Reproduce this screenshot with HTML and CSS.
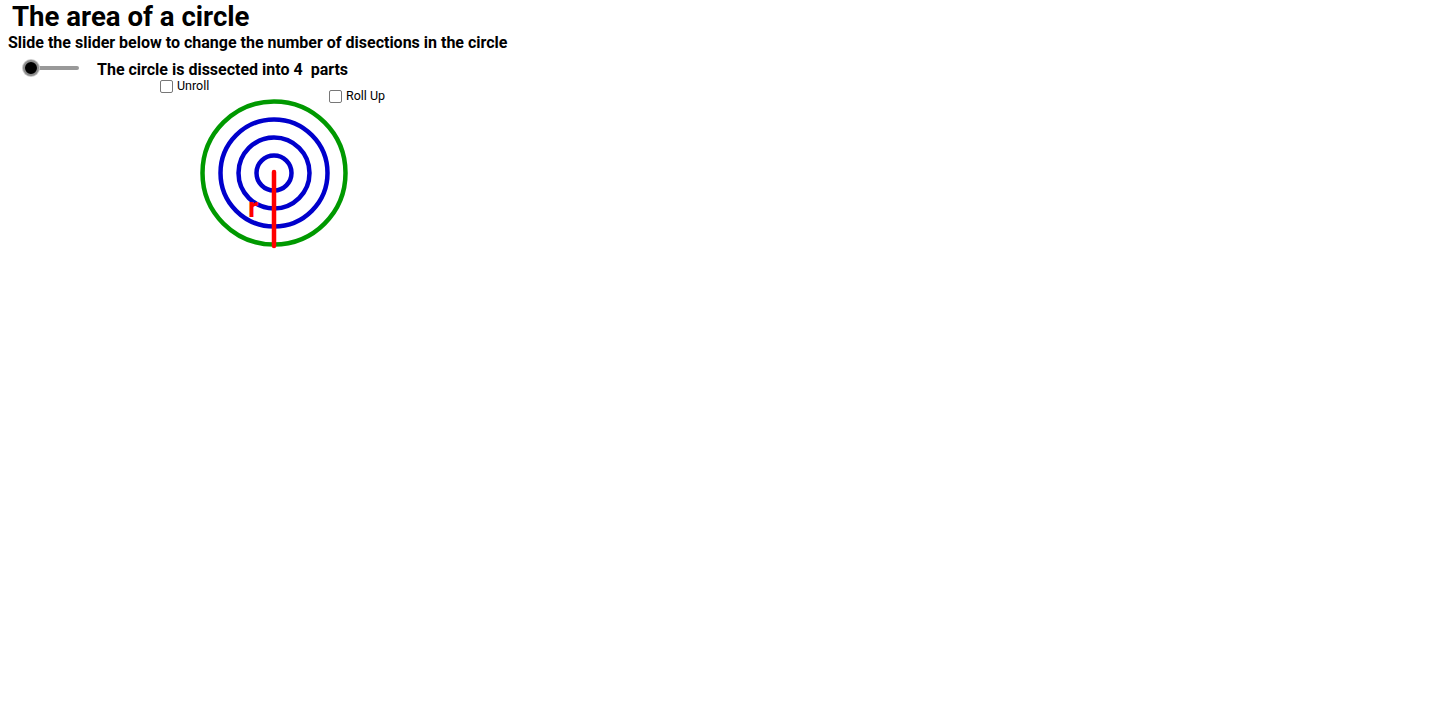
FILE: index.html
```html
<!DOCTYPE html>
<html>
<head>
<meta charset="utf-8">
<link rel="stylesheet" href="styles.css">
</head>
<body>
<div class="applet">
  <h1 class="title">The area of a circle</h1>
  <p class="subtitle">Slide the slider below to change the number of disections in the circle</p>
  <div class="stage">
    <div class="slider"><span class="track"></span><span class="knob"></span></div>
    <p class="caption">The circle is dissected into 4&nbsp; parts</p>
    <label class="check check-unroll"><span class="box"></span>Unroll</label>
    <label class="check check-rollup"><span class="box"></span>Roll Up</label>
    <svg class="diagram" width="160" height="160" viewBox="194 93 160 160">
      <circle cx="274" cy="173" r="71.5" fill="none" stroke="#009900" stroke-width="4.5"/>
      <circle cx="274" cy="173" r="53.5" fill="none" stroke="#0000cc" stroke-width="4.5"/>
      <circle cx="274" cy="173" r="35.5" fill="none" stroke="#0000cc" stroke-width="4.5"/>
      <circle cx="274" cy="173" r="17.5" fill="none" stroke="#0000cc" stroke-width="4.5"/>
      <line x1="274" y1="172" x2="274" y2="246" stroke="#ff0000" stroke-width="4.5" stroke-linecap="round"/>
      <text x="248" y="217" class="rlabel">r</text>
    </svg>
  </div>
</div>
</body>
</html>
```
FILE: styles.css
```css
html, body {
  margin: 0;
  padding: 0;
  background: #ffffff;
}
.applet {
  width: 1440px;
  height: 704px;
  font-family: Roboto, "Liberation Sans", sans-serif;
  color: #000000;
  overflow: hidden;
}
.title {
  margin: 0;
  padding: 0 0 0 12px;
  font-size: 27.6px;
  font-weight: 700;
  line-height: 34px;
}
.subtitle {
  margin: 0;
  padding: 0 0 0 8px;
  font-size: 16px;
  font-weight: 700;
  line-height: 18px;
}
.stage {
  position: relative;
  height: 640px;
}
.slider {
  position: absolute;
  left: 23px;
  top: 8px;
  width: 58px;
  height: 16px;
}
.track {
  position: absolute;
  left: 6px;
  top: 6px;
  width: 50px;
  height: 4px;
  background: #999999;
  border-radius: 2px;
}
.knob {
  position: absolute;
  left: 0;
  top: 0;
  width: 12px;
  height: 12px;
  border-radius: 50%;
  background: #000000;
  border: 2px solid #8c8c8c;
  box-shadow: 0 0 0 1px #c8c8c8;
}
.caption {
  position: absolute;
  left: 97px;
  top: 9px;
  margin: 0;
  font-size: 16px;
  font-weight: 700;
  line-height: 18px;
  white-space: nowrap;
}
.check {
  position: absolute;
  display: flex;
  align-items: center;
  gap: 4px;
  font-size: 12.5px;
  line-height: 14px;
  white-space: nowrap;
}
.check-unroll {
  left: 160px;
  top: 27px;
}
.check-rollup {
  left: 329px;
  top: 37px;
}
.box {
  display: block;
  width: 11px;
  height: 11px;
  border: 1px solid #777777;
  border-radius: 2px;
  background: #ffffff;
}
.diagram {
  position: absolute;
  left: 194px;
  top: 41px;
}
.rlabel {
  font-family: Roboto, "Liberation Sans", sans-serif;
  font-size: 28px;
  font-weight: 700;
  fill: #ff0000;
}
```
